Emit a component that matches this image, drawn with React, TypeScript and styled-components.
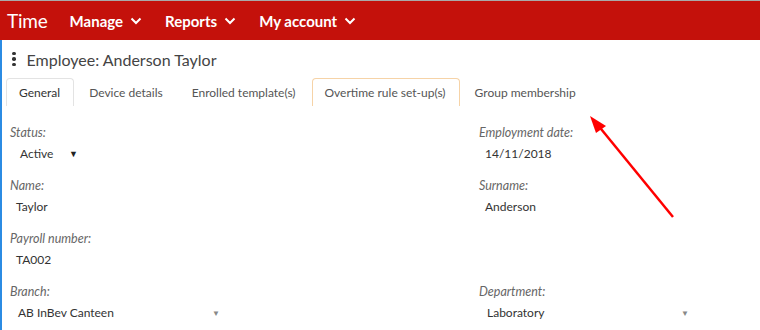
import React from 'react';
import styled, {createGlobalStyle} from 'styled-components';

const Global = createGlobalStyle`
  html, body { margin: 0; padding: 0; background: #fff; }
  body { font-family: Lato, "Open Sans", sans-serif; }
`;

const Page = styled.div`
  width: 760px;
  height: 330px;
  overflow: hidden;
  border-top: 1px solid #a9a9a9;
  box-sizing: border-box;
  position: relative;
`;

const TopBar = styled.header`
  height: 39px;
  background: #c4110b;
  display: flex;
  align-items: center;
  padding-left: 7px;
  color: #fff;
`;

const Brand = styled.div`
  font-size: 19px;
  margin-right: 22px;
  letter-spacing: -0.2px;
`;

const NavItem = styled.div`
  display: flex;
  align-items: center;
  gap: 7px;
  font-size: 15px;
  font-weight: 700;
  margin-right: 23px;
`;

const Body = styled.div`
  border-left: 2px solid #2b8be3;
  height: 290px;
`;

const TitleRow = styled.div`
  display: flex;
  align-items: center;
  height: 38px;
  padding-left: 10px;
  gap: 11px;
  font-size: 16px;
  color: #444;
`;

const Dots = styled.div`
  display: flex;
  flex-direction: column;
  gap: 2px;
  span { width: 3.5px; height: 3.5px; border-radius: 50%; background: #333; display: block; }
`;

const Tabs = styled.div`
  display: flex;
  padding-left: 4px;
  height: 28px;
`;

const Tab = styled.div<{ $active?: boolean; $focus?: boolean }>`
  display: flex;
  align-items: center;
  padding: 0 13px 0 12px;
  margin-right: 2px;
  font-size: 12px;
  color: ${(p) => (p.$active ? '#333' : '#555')};
  border: 1px solid ${(p) => (p.$active ? '#e3e3e3' : p.$focus ? '#f6d3a7' : 'transparent')};
  border-bottom: none;
  border-radius: 4px 4px 0 0;
`;

const Form = styled.div`
  display: grid;
  grid-template-columns: 469px 1fr;
  padding: 19px 0 0 8px;
  row-gap: 8px;
`;

const Field = styled.div`
  height: 45px;
`;

const Label = styled.div`
  font-size: 12.5px;
  font-style: italic;
  color: #666;
  height: 18px;
`;

const Value = styled.div<{ $indent: number; $width?: number }>`
  font-size: 12px;
  color: #333;
  padding-left: ${(p) => p.$indent}px;
  margin-top: 3px;
  display: flex;
  align-items: center;
  width: ${(p) => (p.$width ? `${p.$width}px` : 'auto')};
  justify-content: space-between;
`;

const Caret = styled.span<{ $dark?: boolean }>`
  font-size: ${(p) => (p.$dark ? '9px' : '8px')};
  color: ${(p) => (p.$dark ? '#222' : '#888')};
`;

const Arrow = styled.svg`
  position: absolute;
  left: 585px;
  top: 110px;
`;

const Chevron = () => (
  <svg width="12" height="8" viewBox="0 0 12 8">
    <polyline points="1.5,1.5 6,6 10.5,1.5" fill="none" stroke="#fff" strokeWidth="2" />
  </svg>
);

export default function App() {
  return (
    <Page>
      <Global />
      <TopBar>
        <Brand>Time</Brand>
        <NavItem>Manage <Chevron /></NavItem>
        <NavItem>Reports <Chevron /></NavItem>
        <NavItem>My account <Chevron /></NavItem>
      </TopBar>
      <Body>
        <TitleRow>
          <Dots><span /><span /><span /></Dots>
          Employee: Anderson Taylor
        </TitleRow>
        <Tabs>
          <Tab $active>General</Tab>
          <Tab>Device details</Tab>
          <Tab>Enrolled template(s)</Tab>
          <Tab $focus>Overtime rule set-up(s)</Tab>
          <Tab>Group membership</Tab>
        </Tabs>
        <Form>
          <Field>
            <Label>Status:</Label>
            <Value $indent={10} $width={58}>Active <Caret $dark>▼</Caret></Value>
          </Field>
          <Field>
            <Label>Employment date:</Label>
            <Value $indent={6}>14/11/2018</Value>
          </Field>
          <Field>
            <Label>Name:</Label>
            <Value $indent={6}>Taylor</Value>
          </Field>
          <Field>
            <Label>Surname:</Label>
            <Value $indent={6}>Anderson</Value>
          </Field>
          <Field>
            <Label>Payroll number:</Label>
            <Value $indent={6}>TA002</Value>
          </Field>
          <Field />
          <Field>
            <Label>Branch:</Label>
            <Value $indent={8} $width={202}>AB InBev Canteen <Caret>▼</Caret></Value>
          </Field>
          <Field>
            <Label>Department:</Label>
            <Value $indent={8} $width={202}>Laboratory <Caret>▼</Caret></Value>
          </Field>
        </Form>
      </Body>
      <Arrow width="100" height="115" viewBox="0 0 100 115">
        <line x1="88" y1="106" x2="12" y2="13" stroke="#f00" strokeWidth="2.5" />
        <polygon points="5,5 21,15 11,22" fill="#f00" />
      </Arrow>
    </Page>
  );
}
